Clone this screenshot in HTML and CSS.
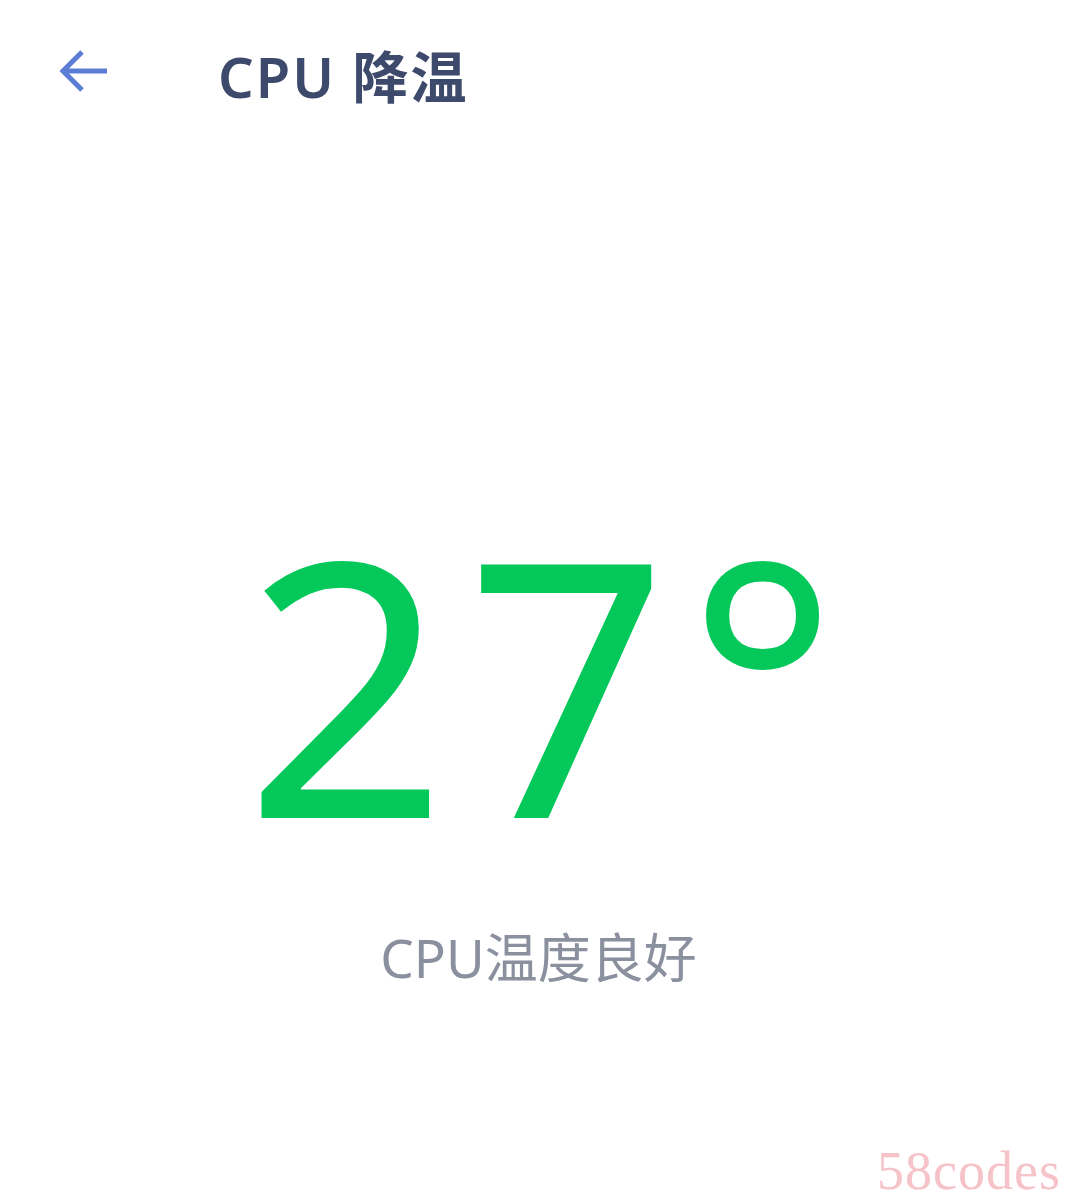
FILE: index.html
```html
<!DOCTYPE html>
<html lang="zh-CN">
<head>
    <meta charset="UTF-8">
    <meta name="viewport" content="width=device-width, initial-scale=1.0">
    <title>CPU 降温</title>
    <link rel="stylesheet" href="styles.css">
</head>
<body>
    <div class="page">

        <!-- Header -->
        <div class="header">
            <button class="back-btn">
                <svg width="52" height="52" viewBox="0 0 52 52">
                    <path d="M49 24 H6 M24 5 L5 24 L24 43" fill="none" stroke="#5b7dd6" stroke-width="5" stroke-linecap="butt" stroke-linejoin="miter"/>
                </svg>
            </button>
            <h1 class="title">CPU 降温</h1>
        </div>

        <!-- Temperature -->
        <div class="temp-box">
            <div class="temp">27°</div>
            <div class="status">CPU温度良好</div>
        </div>

        <div class="watermark">58codes</div>
    </div>
</body>
</html>
```

FILE: styles.css
```css
body {
    margin: 0;
    background: #fff;
    font-family: "Noto Sans", "Noto Sans CJK SC", sans-serif;
}
.page {
    position: relative;
    height: 1204px;
    overflow: hidden;
}
.header {
    display: flex;
    align-items: center;
    height: 150px;
    padding: 0 0 0 58px;
    box-sizing: border-box;
    margin-top: -2px;
}
.back-btn {
    border: none;
    background: none;
    padding: 0;
    width: 52px;
    height: 52px;
    margin-right: 108px;
}
.title {
    margin: 0;
    font-size: 56px;
    font-weight: 600;
    letter-spacing: 2px;
    color: #3e4a6b;
}
.temp-box {
    display: flex;
    flex-direction: column;
    align-items: center;
    padding-top: 355px;
}
.temp {
    font-size: 355px;
    line-height: 1;
    color: #04c85a;
    letter-spacing: 18px;
    padding-left: 24px;
}
.status {
    margin-top: 59px;
    font-size: 53px;
    color: #8a909e;
}
.watermark {
    position: absolute;
    right: 16px;
    bottom: 2px;
    font-family: "Liberation Serif", serif;
    font-size: 54px;
    color: #f6c3c9;
    letter-spacing: 1px;
}
```
